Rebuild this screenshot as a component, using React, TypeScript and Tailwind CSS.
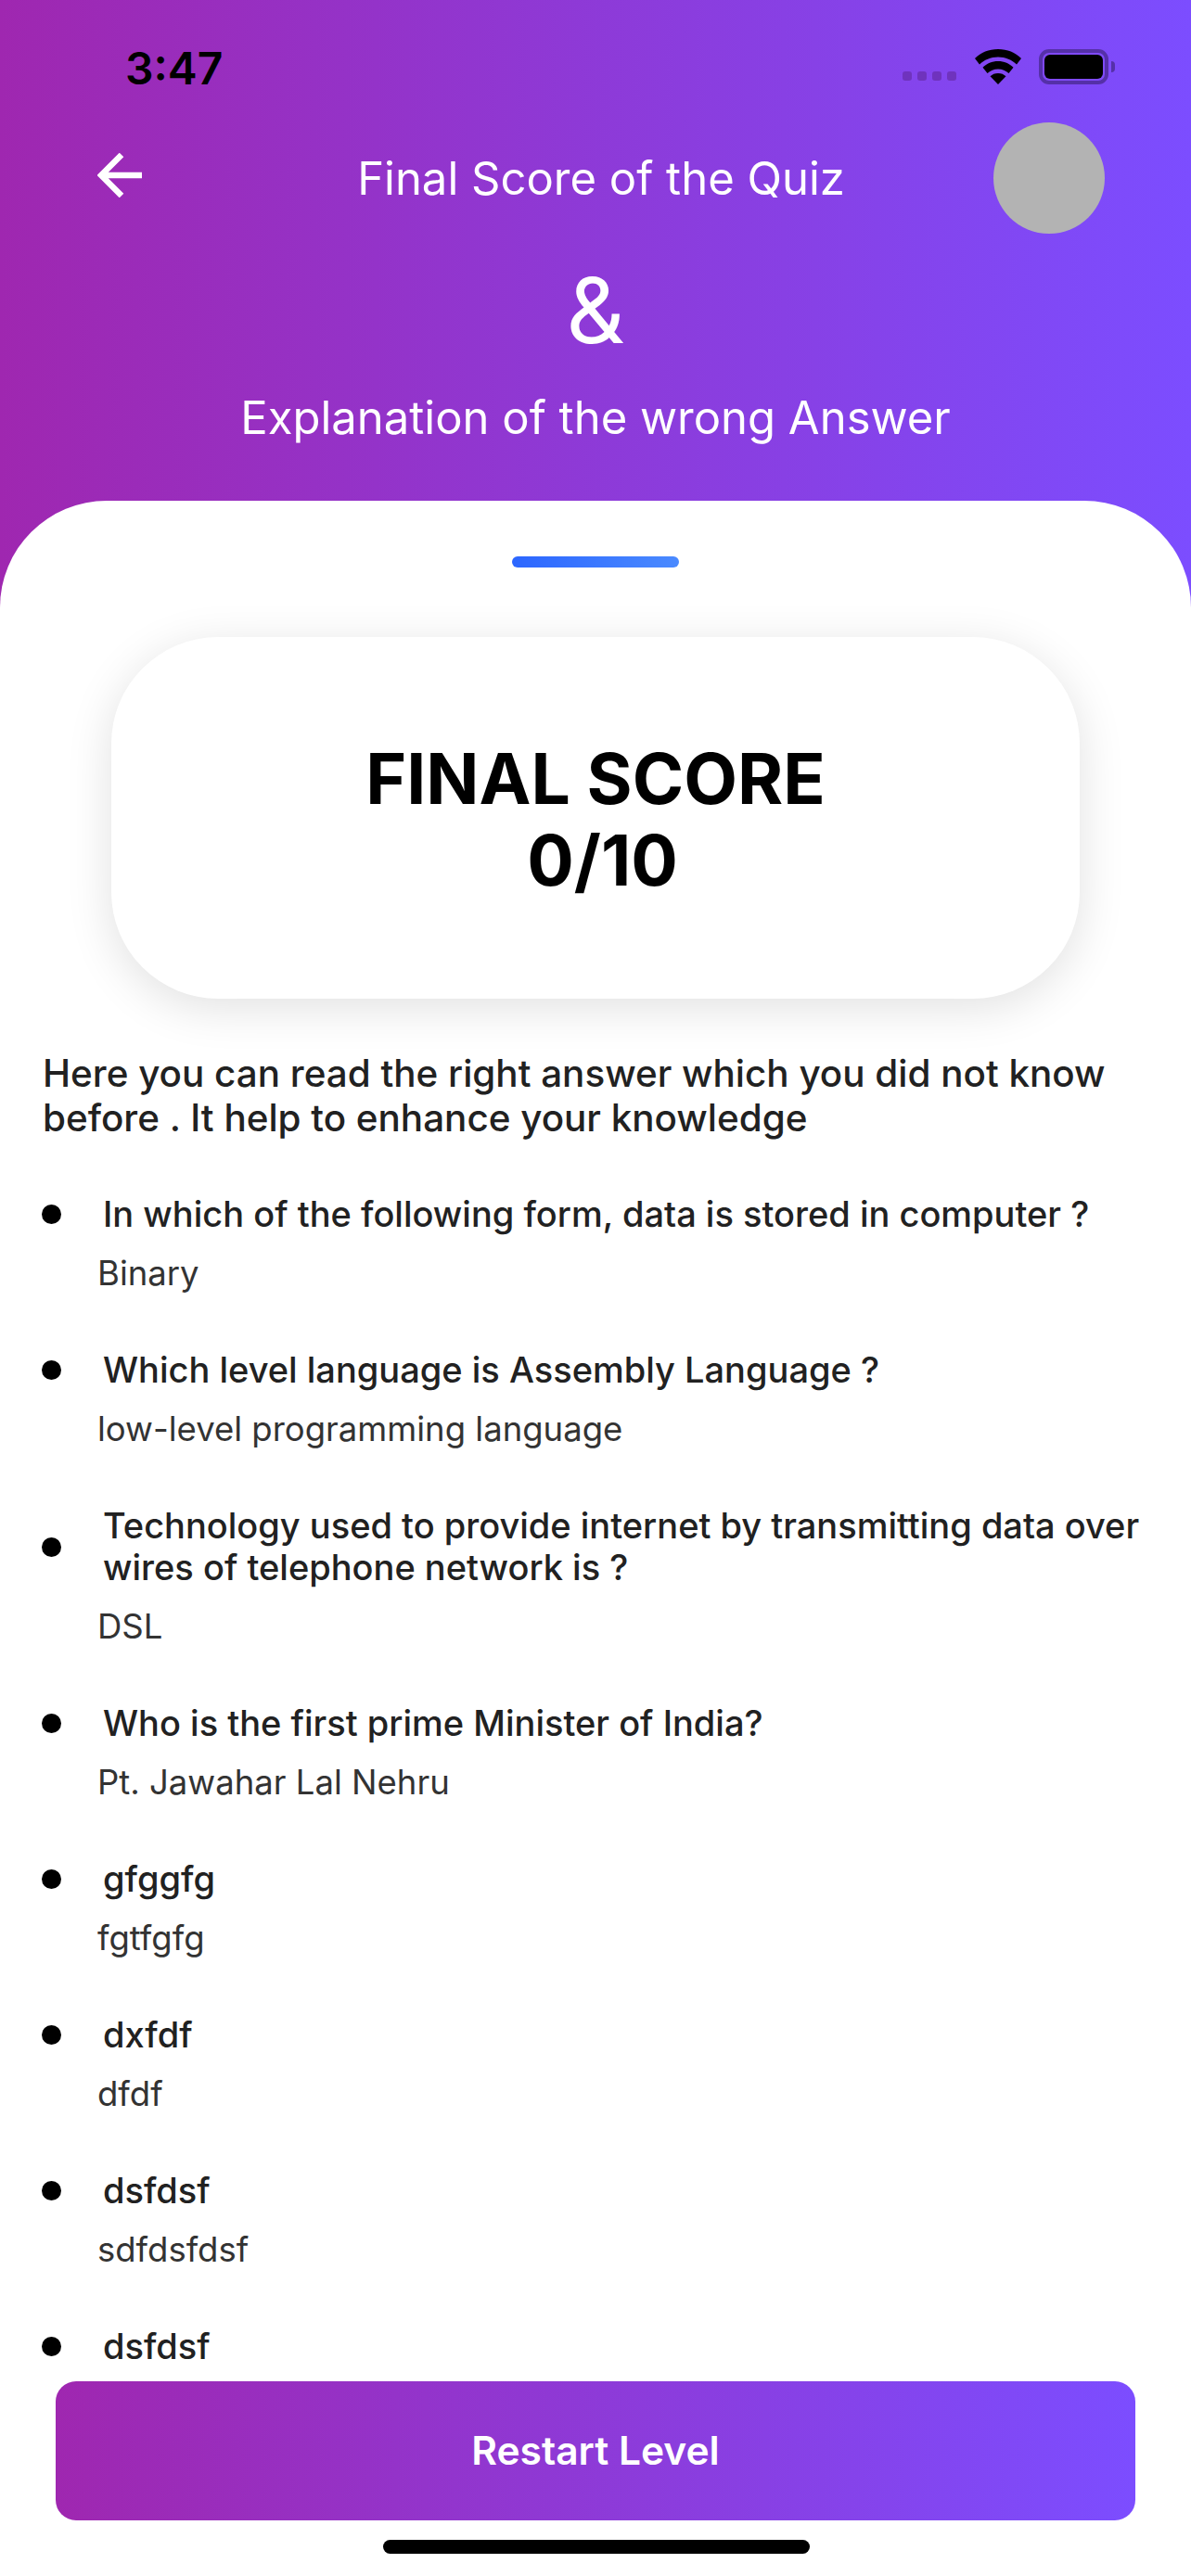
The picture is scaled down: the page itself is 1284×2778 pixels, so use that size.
import React from 'react';

const items = [
  { q: 'In which of the following form, data is stored in computer ?', a: 'Binary' },
  { q: 'Which level language is Assembly Language ?', a: 'low-level programming language' },
  { q: 'Technology used to provide internet by transmitting data over wires of telephone network is ?', a: 'DSL' },
  { q: 'Who is the first prime Minister of India?', a: 'Pt. Jawahar Lal Nehru' },
  { q: 'gfggfg', a: 'fgtfgfg' },
  { q: 'dxfdf', a: 'dfdf' },
  { q: 'dsfdsf', a: 'sdfdsfdsf' },
  { q: 'dsfdsf', a: 'sdfsdf' },
];

const StatusIcons = () => (
  <div className="flex items-end">
    <div className="flex gap-[6px] mb-[4px] mr-[19px]">
      <div className="w-[10px] h-[10px] rounded-[3px] bg-[#6f33bd]" />
      <div className="w-[10px] h-[10px] rounded-[3px] bg-[#6f33bd]" />
      <div className="w-[10px] h-[10px] rounded-[3px] bg-[#6f33bd]" />
      <div className="w-[10px] h-[10px] rounded-[3px] bg-[#6f33bd]" />
    </div>
    <svg width="52" height="38" viewBox="0 0 52 38" className="mr-[18px]">
      <path d="M26 0C16 0 7.500 3.500 1 10l5 6.500C11 11.500 18 8.500 26 8.500s15 3 20 8l5-6.500C44.500 3.500 36 0 26 0z" fill="#000" />
      <path d="M26 13c-6.500 0-12.300 2.500-16.500 6.700l5 6.400c3-2.900 7-4.600 11.500-4.600s8.500 1.700 11.500 4.600l5-6.400C38.300 15.500 32.500 13 26 13z" fill="#000" />
      <path d="M26 26c-3.300 0-6.300 1.200-8.500 3.300L26 38l8.500-8.700C32.300 27.200 29.300 26 26 26z" fill="#000" />
    </svg>
    <div className="w-[75px] h-[38px] rounded-[11px] border-[4px] border-[#5530a8] p-[2px]">
      <div className="w-full h-full rounded-[6px] bg-black" />
    </div>
    <div className="w-[4px] h-[12px] rounded-r-full bg-[#5530a8] ml-[3px] mb-[13px]" />
  </div>
);

export default function App() {
  return (
    <div className="relative w-[1284px] h-[2778px] overflow-hidden bg-white font-['Inter',sans-serif]">
      <div className="h-[660px] bg-linear-to-r/srgb from-[#9f27b0] to-[#7c4dff]">
        <div className="flex justify-between pl-[135px] pr-[82px] pt-[47px] h-[100px]">
          <span className="text-[48px] leading-[54px] font-semibold text-black">3:47</span>
          <div className="pt-[6px]">
            <StatusIcons />
          </div>
        </div>
        <div className="flex items-center justify-between pl-[105px] pr-[93px] pt-[32px] h-[152px]">
          <svg width="50" height="48" viewBox="0 0 50 48" fill="none" stroke="#fff" strokeWidth="6.500" className="mt-[-6px]">
            <path d="M26 2L4 24l22 22M4 24h44" />
          </svg>
          <span className="text-[49px] leading-[60px] text-white ml-[70px] mt-[2px]">Final Score of the Quiz</span>
          <div className="w-[120px] h-[120px] rounded-full bg-[#b3b3b3]" />
        </div>
        <div className="flex flex-col items-center text-white">
          <span className="text-[98px] leading-[116px] mt-[25px]">&amp;</span>
          <span className="text-[49px] leading-[60px] mt-[28px]">Explanation of the wrong Answer</span>
        </div>
      </div>

      <div className="absolute top-[540px] left-0 w-full h-[2238px] bg-white rounded-t-[115px]">
        <div className="flex justify-center pt-[60px]">
          <div className="w-[180px] h-[12px] rounded-full bg-linear-to-r/srgb from-[#2c66ff] to-[#4a8aff]" />
        </div>
        <div className="mx-[120px] mt-[75px] h-[390px] pt-[4px] rounded-[115px] bg-white shadow-[0_10px_50px_rgba(0,0,0,0.12)] flex flex-col items-center justify-center">
          <span className="text-[75px] leading-[88px] font-bold text-black">FINAL SCORE</span>
          <span className="text-[75px] leading-[88px] font-bold text-black ml-[15px]">0/10</span>
        </div>
        <p className="ml-[46px] mr-[40px] mt-[57px] text-[40.400px] leading-[48px] font-medium text-[#212121]">
          Here you can read the right answer which you did not know before . It help to enhance your knowledge
        </p>
        <div className="mt-[57px] ml-[45px] mr-[40px] flex flex-col gap-[59px]">
          {items.map((item, i) => (
            <div key={i}>
              <div className="flex items-center gap-[45px]">
                <div className="w-[21px] h-[21px] rounded-full bg-black shrink-0" />
                <p className="text-[38px] leading-[45px] font-medium text-[#212121]">{item.q}</p>
              </div>
              <p className="ml-[60px] mt-[19px] text-[36.500px] leading-[45px] text-[#333333]">{item.a}</p>
            </div>
          ))}
        </div>
      </div>

      <div className="absolute left-0 top-[2546px] w-full h-[232px] bg-white pt-[22px]">
        <button className="block mx-[60px] w-[1164px] h-[150px] rounded-[22px] bg-linear-to-r/srgb from-[#9f27b0] to-[#7c4dff] text-white text-[42.500px] font-semibold">
          Restart Level
        </button>
      </div>
      <div className="absolute left-[413px] top-[2739px] w-[460px] h-[15px] rounded-full bg-black" />
    </div>
  );
}
